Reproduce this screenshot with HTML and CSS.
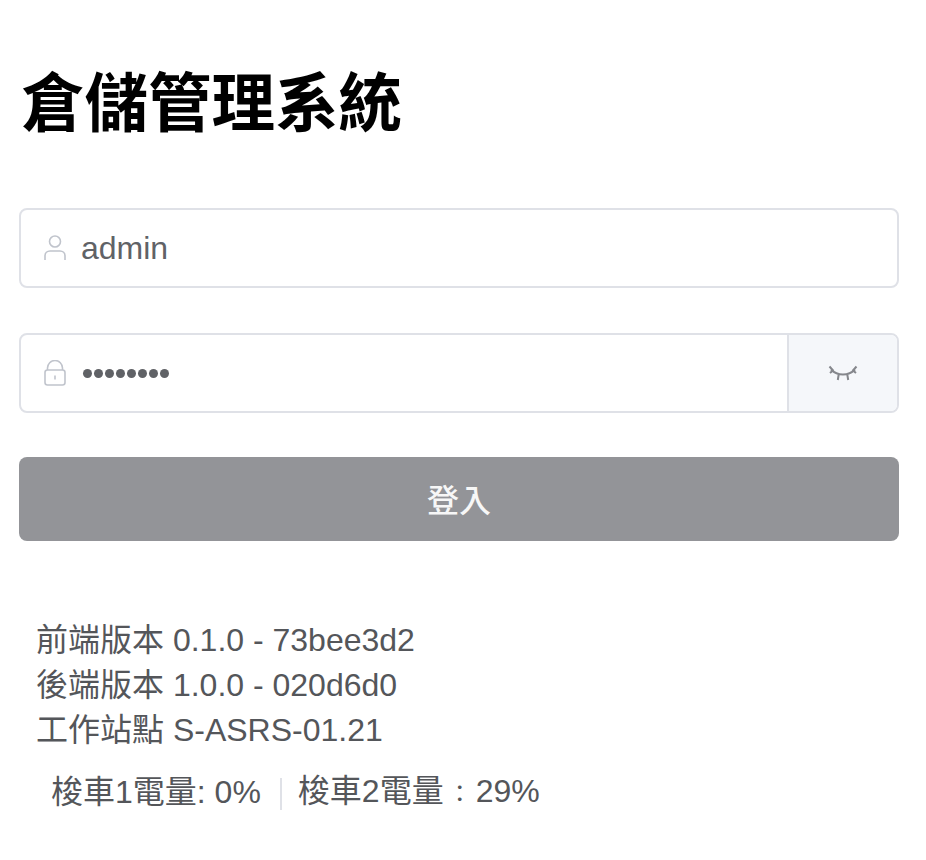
FILE: index.html
```html
<!DOCTYPE html>
<html lang="zh-Hant">
<head>
  <meta charset="UTF-8">
  <meta name="viewport" content="width=device-width, initial-scale=1">
  <title>倉儲管理系統</title>
  <link rel="stylesheet" href="styles.css">
</head>
<body>
  <div class="login">
    <h1 class="title">倉儲管理系統</h1>

    <form class="form">
      <div class="field">
        <svg class="field-icon" viewBox="0 0 22 26" fill="none" stroke="#c0c4cc" stroke-width="1.600">
          <circle cx="11" cy="6.500" r="5.500"/>
          <path d="M1 25v-4c0-3 2.200-5 5-5h10c2.800 0 5 2 5 5v4"/>
        </svg>
        <span class="field-value">admin</span>
      </div>

      <div class="field">
        <svg class="field-icon" viewBox="0 0 22 26" fill="none" stroke="#c0c4cc" stroke-width="1.600">
          <path d="M3.500 10V8a7.500 7.500 0 0 1 15 0v2"/>
          <rect x="1" y="10" width="20" height="15" rx="2.500"/>
          <path d="M11 15.500v4"/>
        </svg>
        <span class="field-value dots">
          <i></i><i></i><i></i><i></i><i></i><i></i><i></i><i></i>
        </span>
        <span class="field-append">
          <svg class="eye" viewBox="0 0 30 16" fill="none" stroke="#85878c" stroke-width="2">
            <path d="M3 4.500c3.500 3.500 7.500 5 12 5s8.500-1.500 12-5"/>
            <path d="M1.500 1.500l4 4.500M28.500 1.500l-4 4.500M2 8l3-2.500M28 8l-3-2.500M9.800 15l.9-5.500M20.200 15l-.9-5.500"/>
          </svg>
        </span>
      </div>

      <button class="submit" type="button">登入</button>
    </form>

    <div class="info">
      <p>前端版本 0.1.0 - 73bee3d2</p>
      <p>後端版本 1.0.0 - 020d6d0</p>
      <p>工作站點 S-ASRS-01.21</p>
    </div>

    <div class="battery">
      <span>梭車1電量: 0%</span>
      <span class="divider"></span>
      <span>梭車2電量<span class="colon">：</span>29%</span>
    </div>
  </div>
</body>
</html>
```

FILE: styles.css
```css
* { margin:0; padding:0; box-sizing:border-box; }
html, body { width:100%; height:100%; background:#fff; }
body {
  font-family:"Liberation Sans","Noto Sans CJK TC",sans-serif;
  color:#606266;
}
.login { padding:63px 27px 0 19px; }
.title {
  font-size:63.500px;
  line-height:82px;
  font-weight:700;
  color:#000;
  padding-left:2px;
  margin-bottom:63px;
}
.form {
  display:flex;
  flex-direction:column;
  gap:45px;
}
.field {
  display:flex;
  align-items:center;
  height:80px;
  border:2px solid #dfe1e7;
  border-radius:8px;
  background:#fff;
  padding-left:23px;
  overflow:hidden;
}
.field-icon { width:22px; height:26px; flex:none; }
.field-value {
  flex:1;
  margin-left:15px;
  font-size:32px;
  line-height:40px;
}
.dots { display:flex; gap:2px; margin-left:17px; }
.dots i {
  width:9px;
  height:9px;
  border-radius:50%;
  background:#606266;
}
.field-append {
  display:flex;
  align-items:center;
  justify-content:center;
  width:110px;
  height:100%;
  background:#f5f7fa;
  border-left:2px solid #dfe1e7;
}
.eye { width:30px; height:16px; }
.submit {
  display:block;
  height:84px;
  margin-top:-1px;
  padding-bottom:2px;
  border:none;
  border-radius:8px;
  background:#939498;
  color:#f7f7f7;
  font-family:inherit;
  font-size:32px;
  font-weight:500;
}
.info {
  margin-top:77px;
  padding-left:17px;
  font-size:32px;
  line-height:45px;
  color:#54565a;
}
.battery {
  display:flex;
  align-items:center;
  margin-top:16px;
  padding-left:32px;
  font-size:32px;
  line-height:45px;
  color:#54565a;
}
.colon {
  display:inline-block;
  width:32px;
  font-size:24px;
  text-align:center;
}
.divider {
  width:2px;
  height:32px;
  margin:3px 16px 0 19px;
  background:#dfe1e7;
}
```
